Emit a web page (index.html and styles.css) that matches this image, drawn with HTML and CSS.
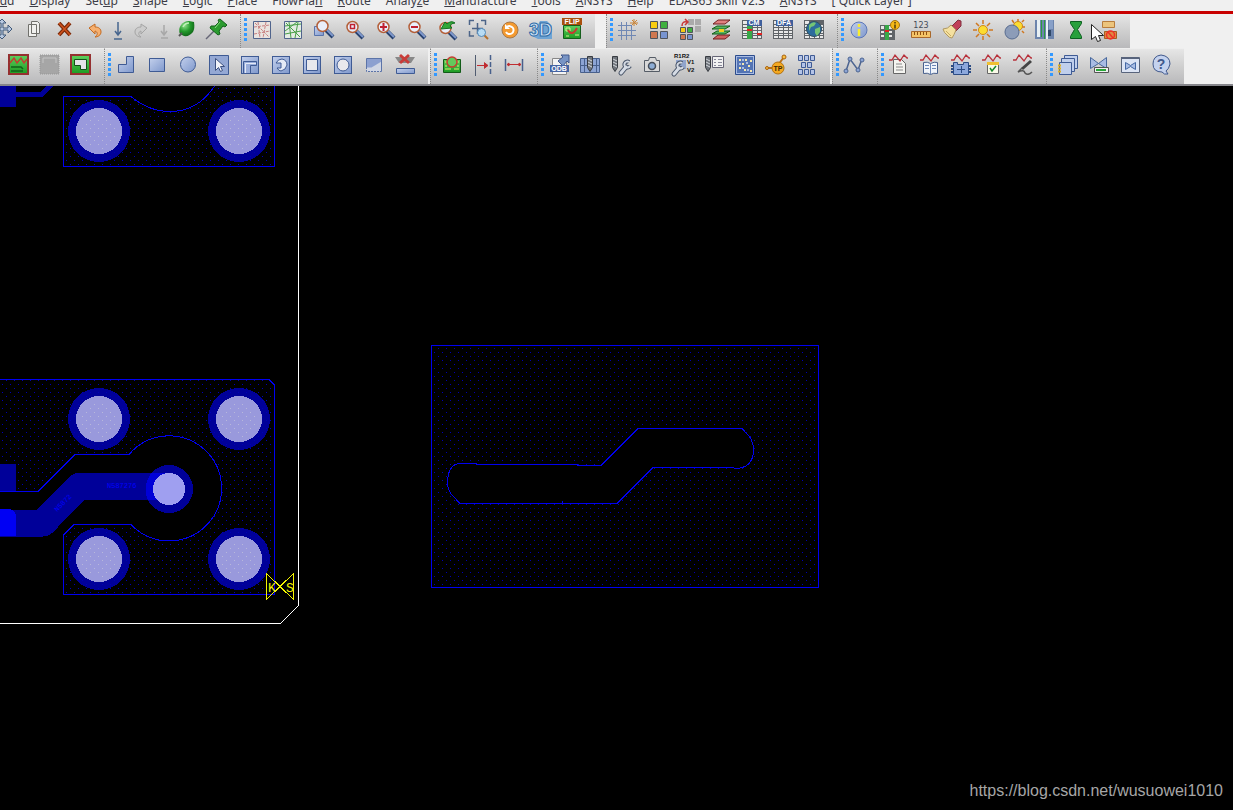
FILE: index.html
```html
<!DOCTYPE html>
<html lang="en">
<head>
<meta charset="utf-8">
<title>PCB Editor</title>
<link rel="stylesheet" href="styles.css">
</head>
<body>
<svg class="defs" aria-hidden="true">
  <defs>
    <linearGradient id="blue" x1="0" y1="0" x2="1" y2="1"><stop offset="0" stop-color="#c3d0ec"/><stop offset="1" stop-color="#7f98cc"/></linearGradient>
    <linearGradient id="green" x1="0" y1="0" x2="0" y2="1"><stop offset="0" stop-color="#5fd05f"/><stop offset="1" stop-color="#1c9a22"/></linearGradient>
    <radialGradient id="ball" cx=".35" cy=".3" r=".8"><stop offset="0" stop-color="#8fe08a"/><stop offset=".5" stop-color="#249a2c"/><stop offset="1" stop-color="#0b5a12"/></radialGradient>
    <pattern id="dots" width="8" height="8" patternUnits="userSpaceOnUse"><path d="M2 0h1v1h-1zM6 4h1v1h-1z" fill="#0000b4" stroke="none"/></pattern>
    <pattern id="specks" width="8" height="8" patternUnits="userSpaceOnUse"><path d="M2 0h1v1h-1zM6 4h1v1h-1z" fill="#b8b8dc" stroke="none"/></pattern>
    <symbol id="lens" viewBox="0 0 25 25"><path d="M13 13l7 7" stroke="#26406e" stroke-width="4"/><path d="M13 12l7 7" stroke="#7f98cc" stroke-width="2"/><circle cx="9.500" cy="9" r="5.500" fill="#e9eefa" stroke="#b4603a" stroke-width="1.500"/></symbol>
    <symbol id="tile" viewBox="0 0 25 25"><rect x="3.5" y="3.5" width="17" height="17" fill="url(#blue)" stroke="#3f5b94"/></symbol>
    <symbol id="wave" viewBox="0 0 25 25"><path d="M2 7h3l3-5 5 6 4-6 3 3h1" fill="none" stroke="#b8303a" stroke-width="1.3"/></symbol>
    <symbol id="sheet" viewBox="0 0 25 25"><path d="M2 2h20v19H2z" fill="#606468"/><path d="M3 7h4v2H3zm5 0h4v2H8zm5 0h4v2h-4zm5 0h3v2h-3zM3 10h4v2H3zm5 0h4v2H8zm5 0h4v2h-4zm5 0h3v2h-3zM3 13h4v2H3zm5 0h4v2H8zm5 0h4v2h-4zm5 0h3v2h-3zM3 16h4v1H3zm5 0h4v1H8zm5 0h4v1h-4zm5 0h3v1h-3zM3 18h4v2H3zm5 0h4v2H8zm5 0h4v2h-4zm5 0h3v2h-3zM3 3h4v3H3z" fill="#e8e8e8"/></symbol>
    <symbol id="drill" viewBox="0 0 25 25"><path d="M3.500 3.500h5v11l-2.500 4-2.500-4z" fill="#70757c" stroke="#383c42"/><path d="M4 6l4 2M4 9l4 2M4 12l4 2" stroke="#d4d8dc"/></symbol>
    <symbol id="wrench" viewBox="0 0 25 25"><path d="M12 20l5-6" stroke="#485468" stroke-width="5" stroke-linecap="round"/><path d="M20 9a3 3 0 1 0 1 4" fill="none" stroke="#485468" stroke-width="4"/><path d="M12 20l5-6" stroke="#d5dbe4" stroke-width="3" stroke-linecap="round"/><path d="M20 9a3 3 0 1 0 1 4" fill="none" stroke="#d5dbe4" stroke-width="2"/></symbol>
    <symbol id="pad" viewBox="0 0 62 62"><g stroke="none"><circle cx="31" cy="31" r="31" fill="#000099"/><circle cx="31" cy="31" r="31" fill="url(#dots)"/><circle cx="31" cy="31" r="23" fill="#9999dc"/><circle cx="31" cy="31" r="18" fill="url(#specks)"/></g></symbol>
  </defs>
</svg>

<nav class="menu" aria-label="Main menu">
  <button>A<u>d</u>d</button><button><u>D</u>isplay</button><button>Set<u>u</u>p</button><button><u>S</u>hape</button><button><u>L</u>ogic</button><button><u>P</u>lace</button><button>FlowPla<u>n</u></button><button><u>R</u>oute</button><button>Analy<u>z</u>e</button><button><u>M</u>anufacture</button><button><u>T</u>ools</button><button><u>A</u>NSYS</button><button><u>H</u>elp</button><button>EDA365 Skill V2.3</button><button><u>A</u>NSYS</button><button>[ Quick Layer ]</button>
</nav>

<div class="row">
  <div class="group lead" role="toolbar" aria-label="Edit">
    <button aria-label="Move"><svg viewBox="0 0 25 25"><path d="M12 1l4 4h-3v5h5V7l4 4-4 4v-3h-5v5h3l-4 4-4-4h3v-5H6v3l-4-4 4-4v3h5V5H8z" fill="#b9c9e0" stroke="#3f5878"/></svg></button>
    <button aria-label="Copy"><svg viewBox="0 0 25 25"><path d="M7.500 6.500h8v12h-8zM10.500 3.500h6l2 2v10h-8z" fill="#f0f0ee" stroke="#70706c"/></svg></button>
    <button aria-label="Delete"><svg viewBox="0 0 25 25"><path d="M7 5l11 12M18 5L7 17" stroke="#7a2a0a" stroke-width="4"/><path d="M7 5l11 12M18 5L7 17" stroke="#d0521c" stroke-width="1.500"/></svg></button>
    <button aria-label="Undo"><svg viewBox="0 0 25 25"><path d="M6 10l6-4v3c4 0 6 2 6 5s-3 5-6 5c3-2 3-5 0-6v3z" fill="#f6b070" stroke="#c46a20"/></svg></button>
    <button class="slim" aria-label="Undo list"><svg viewBox="0 0 13 25"><path d="M6 4v12M3 13l3 4 3-4M2 21h8" fill="none" stroke="#46658e" stroke-width="1.500"/></svg></button>
    <button aria-label="Redo"><svg viewBox="0 0 25 25"><path d="M18 10l-6-4v3c-4 0-6 2-6 5s3 5 6 5c-3-2-3-5 0-6v3z" fill="#ccc" stroke="#a4a4a4"/></svg></button>
    <button class="slim" aria-label="Redo list"><svg viewBox="0 0 13 25"><path d="M6 7v9M3 13l3 4 3-4M3 20h7" fill="none" stroke="#a8a8a8" stroke-width="1.500"/></svg></button>
    <button aria-label="Unhighlight"><svg viewBox="0 0 25 25"><path d="M5 16Q3 11 6 7q3-4 8-4l5 1q1 6-1 10-4 5-9 4z" fill="url(#ball)"/><path d="M8 9q2-4 6-4" fill="none" stroke="#c0f0b8" stroke-width="1.500"/><path d="M4 18l3-3" stroke="#555" stroke-width="2"/></svg></button>
    <button aria-label="Pin"><svg viewBox="0 0 25 25"><path d="M0 21l8-8" stroke="#667" stroke-width="1.500"/><path d="M14 1l7 6-2 2-2-1-4 5 1 3-2 1-8-7 1-2h4l4-4-1-2z" fill="#2c9c30" stroke="#12601a"/><path d="M14 4l-5 6" stroke="#86dc80"/></svg></button>
  </div>
  <div class="group" role="toolbar" aria-label="View"><i class="grip"></i>
    <button aria-label="Unrats all"><svg viewBox="0 0 25 25"><path d="M3.500 3.500h17v17h-17z" fill="#e9e4e0" stroke="#50648c"/><path d="M4 9l16-2M4 16l16-3M8 4l2 16M16 4l-3 16M5 5l14 14" stroke="#c88080" stroke-dasharray="3 1"/></svg></button>
    <button aria-label="Rats all"><svg viewBox="0 0 25 25"><path d="M3.500 3.500h17v17h-17z" fill="#e4ece4" stroke="#50648c"/><path d="M4 8l16-2M4 16l16-3M8 4l2 16M17 4l-3 16M5 5l14 14M4 13l12-9" stroke="#48a048"/></svg></button>
    <button aria-label="Zoom points"><svg viewBox="0 0 25 25"><path d="M2.500 8.500h9v9h-9z" fill="url(#blue)" stroke="#5873ac"/><use href="#lens" x="1" y="-1"/></svg></button>
    <button aria-label="Zoom fit"><svg viewBox="0 0 25 25"><use href="#lens"/><path d="M7.500 6.500h4v4h-4z" fill="none" stroke="#c02030" stroke-width="1.500"/></svg></button>
    <button aria-label="Zoom in"><svg viewBox="0 0 25 25"><use href="#lens"/><path d="M9.500 5v8M6 9h7" stroke="#c02030" stroke-width="2"/></svg></button>
    <button aria-label="Zoom out"><svg viewBox="0 0 25 25"><use href="#lens"/><path d="M6 9h7" stroke="#c02030" stroke-width="2"/></svg></button>
    <button aria-label="Zoom previous"><svg viewBox="0 0 25 25"><use href="#lens" y="1"/><path d="M5 11l4-7 2 2q4-4 8-1-4 0-5 3l2 2z" fill="#30a838" stroke="#157020"/></svg></button>
    <button aria-label="Zoom selection"><svg viewBox="0 0 25 25"><path d="M2.500 7V2.500H7M14 2.500h4.500V7M2.500 13v5H7M10.500 5v11M5 10.500h11" fill="none" stroke="#4c6488" stroke-width="1.500"/><path d="M17 17l4 4" stroke="#b4702c" stroke-width="2"/><circle cx="14.500" cy="14.500" r="4" fill="#b8dcf4" stroke="#5088b8"/></svg></button>
    <button aria-label="Refresh"><svg viewBox="0 0 25 25"><circle cx="12" cy="12" r="8" fill="#f49a30" stroke="#a87848"/><path d="M8 14a4 4 0 1 0 1-5" fill="none" stroke="#fff" stroke-width="2"/><path d="M7 6v5h5z" fill="#fff"/></svg></button>
    <button aria-label="3D view"><svg viewBox="0 0 25 25"><path d="M11 3h7l5 5v13H9l-6-3z" fill="#6fa4d4"/><text class="three" x="0" y="18">3D</text></svg></button>
    <button aria-label="Flip design"><svg viewBox="0 0 25 25"><path d="M3.500 7.500h17v13h-17z" fill="url(#green)" stroke="#155e1c"/><path d="M6 10h4v3H6zM15 17h4M6 18h3" stroke="#d8f090" fill="none"/><path d="M8 12q4 7 9-2" fill="none" stroke="#c83830" stroke-width="2"/><path d="M2 0h20v7H2z" fill="#a9500e"/><text class="tag" x="12" y="6">FLIP</text></svg></button>
  </div>
  <div class="group apart" role="toolbar" aria-label="Setup"><i class="grip"></i>
    <button aria-label="Grid toggle"><svg viewBox="0 0 25 25"><path d="M5.500 4v18M10.500 4v18M15.500 7v15M2 7.500h14M2 12.500h18M2 17.500h18" stroke="#7088b4"/><path d="M18 1v7M14 5h8M16 2l5 5M21 2l-5 5" stroke="#c88438"/></svg></button>
    <button aria-label="Colors"><svg viewBox="0 0 25 25"><g stroke="#50545c"><path d="M3.500 3.500h7v7h-7z" fill="#f8cc10"/><path d="M13.500 3.500h7v7h-7z" fill="#40b040"/><path d="M3.500 13.500h7v7h-7z" fill="#d07850"/><path d="M13.500 13.500h7v7h-7z" fill="#7894d0"/></g></svg></button>
    <button aria-label="Swap colors"><svg viewBox="0 0 25 25"><path d="M10 1h6v6h-6zm7 0h6v6h-6zm0 7h6v6h-6z" fill="#aaa"/><g stroke="#50545c"><path d="M2.500 9.500h5v5h-5z" fill="#f8cc10"/><path d="M9.500 9.500h5v5h-5z" fill="#40b040"/><path d="M2.500 16.500h5v5h-5z" fill="#d07850"/><path d="M9.500 16.500h5v5h-5z" fill="#7894d0"/></g><path d="M4 8q0-5 5-4M7 1l3 3-3 3" fill="none" stroke="#c83838" stroke-width="1.500"/></svg></button>
    <button aria-label="Cross section"><svg viewBox="0 0 25 25"><path d="M4 21l5-4h12l-5 4z" fill="#d06060" stroke="#702020"/><path d="M3 16l5-3h13l-5 3z" fill="#58b860" stroke="#145c1c"/><path d="M3 11l5-3h13l-5 3z" fill="#58b860" stroke="#145c1c"/><path d="M10 11h5v3h-5z" fill="#f0d020"/><path d="M4 6l5-4h12l-5 4z" fill="#e08080" stroke="#702020"/></svg></button>
    <button aria-label="Constraint manager"><svg viewBox="0 0 25 25"><use href="#sheet"/><path d="M7 7h5v14H7z" fill="#38a848"/><path d="M7 11h5v2H7zm10 4h5v2h-5z" fill="#e02020"/><path d="M7 2h15v6H7z" fill="#3f5f9c"/><text class="tag" x="14" y="7">CM</text></svg></button>
    <button aria-label="DFA"><svg viewBox="0 0 25 25"><use href="#sheet"/><path d="M5 2h17v6H5z" fill="#3f5f9c"/><text class="tag" x="13" y="7">DFA</text></svg></button>
    <button aria-label="Global settings"><svg viewBox="0 0 25 25"><use href="#sheet"/><circle cx="12" cy="11" r="7.500" fill="#2c6c9c" stroke="#305060"/><path d="M7 7q4-4 7-2l-2 3-3 1-2 4zM13 11l5-2v5l-3 4-2-3z" fill="#74c474"/></svg></button>
  </div>
  <div class="group" role="toolbar" aria-label="Display"><i class="grip"></i>
    <button aria-label="Show element"><svg viewBox="0 0 25 25"><circle cx="12" cy="12" r="8" fill="url(#blue)" stroke="#5c78b8"/><path d="M12 6v3M12 11v7" stroke="#f8ec30" stroke-width="2.500"/></svg></button>
    <button aria-label="Constraint info"><svg viewBox="0 0 25 25"><path d="M2 7h15v15H2z" fill="#606468"/><path d="M3 8h3v3H3zm0 5h3v2H3zm0 4h3v2H3zm8-9h3v3h-3zm0 5h3v2h-3zm0 4h3v2h-3z" fill="#e8e8e8"/><path d="M7 7h4v15H7z" fill="#38a848"/><path d="M7 12h4v2H7z" fill="#e02020"/><circle cx="17" cy="7" r="4.500" fill="#f4b818" stroke="#a87410"/><path d="M17 4v1.500M17 6.500v4" stroke="#503808" stroke-width="1.500"/></svg></button>
    <button aria-label="Measure"><svg viewBox="0 0 25 25"><text class="digits" x="12" y="10">123</text><path d="M2.500 13.500h19v6h-19z" fill="#f4c468" stroke="#a8682c"/><path d="M5.500 14v3M8.500 14v3M11.500 14v3M14.500 14v3M17.500 14v3" stroke="#905010"/></svg></button>
    <button aria-label="Highlight"><svg viewBox="0 0 25 25"><path d="M12 8l6-6 3 1v5l-6 6z" fill="#c04058" stroke="#803040"/><path d="M3 11q5 0 8-4l5 5q-2 5-4 8-3 0-5-3-3-2-4-6z" fill="#f4e0a0" stroke="#b09860"/><path d="M6 13l5 5" stroke="#c8ac60"/></svg></button>
    <button aria-label="Shadow on"><svg viewBox="0 0 25 25"><path d="M12 2v4M12 18v4M2 12h4M18 12h4M5 5l3 3M16 16l3 3M19 5l-3 3M8 16l-3 3" stroke="#d07820" stroke-width="1.500"/><circle cx="12" cy="12" r="4.500" fill="#fcdc30" stroke="#d08818"/></svg></button>
    <button aria-label="Shadow off"><svg viewBox="0 0 25 25"><path d="M16 1v3M20 4l2-2M20 9h3M20 13l2 2M10 2l2 3" stroke="#d07820" stroke-width="1.500"/><circle cx="16" cy="8" r="4.500" fill="#fcdc30" stroke="#d08818"/><circle cx="10" cy="14" r="7" fill="#8c9cb8" stroke="#586c90"/></svg></button>
    <button aria-label="Layers"><svg viewBox="0 0 25 25"><path d="M2 2h19v19H2z" fill="#6c84ac"/><path d="M4 2h3v17H4zM13 2h2v19h-2z" fill="#e8f0f4"/><path d="M8 2h1v17H8zM11 2h1v19h-1z" fill="#2c9c40"/><path d="M16 2h4v9h-4z" fill="#88a0c8"/><path d="M15 12h3v6h-3z" fill="#304868"/></svg></button>
    <button aria-label="Waiver"><svg viewBox="0 0 25 25"><path d="M6.500 3.500h11v2l-4 6 4 7v2h-11v-2l4-7-4-6z" fill="#28a03c" stroke="#0c6020"/></svg></button>
    <button aria-label="Hide"><svg viewBox="0 0 25 25"><path d="M7.500 3.500h12v6h-12z" fill="#ecc47c" stroke="#b87c3c"/><path d="M9.500 13.500h12v7h-12z" fill="#e08840" stroke="#a85c20"/><circle cx="15.500" cy="17" r="4" fill="none" stroke="#f03028" stroke-width="1.500"/><path d="M13 14l5 6" stroke="#f03028" stroke-width="1.500"/><path d="M-3.500 6.500v15l4-3 2 5 3-1-2-5h5z" fill="#fff" stroke="#222"/></svg></button>
  </div>
</div>

<div class="row second">
  <div class="group start" role="toolbar" aria-label="Application mode">
    <button aria-label="Etch edit"><svg viewBox="0 0 25 25"><path d="M3 2h19v19H3z" fill="url(#green)" stroke="#953030" stroke-width="2"/><path d="M4 10l4-5 3 5 4-5 3 5 3-4" fill="none" stroke="#c04030" stroke-width="1.500"/><path d="M5 14h10l2 2M5 18h12" fill="none" stroke="#126018" stroke-width="1.500"/></svg></button>
    <button aria-label="Placement edit"><svg viewBox="0 0 25 25"><path d="M3 2h19v19H3z" fill="#a6a6a6" stroke="#979797" stroke-dasharray="1 1"/><path d="M6 5h13v5M6 5v5" fill="none" stroke="#c6c6c6"/></svg></button>
    <button aria-label="Shape edit"><svg viewBox="0 0 25 25"><path d="M3 2h19v19H3z" fill="url(#green)" stroke="#953030" stroke-width="2"/><path d="M6.500 6.500h12v10h-6v-4h-6z" fill="#e4e4e8" stroke="#145018"/></svg></button>
  </div>
  <div class="group" role="toolbar" aria-label="Shape"><i class="grip"></i>
    <button aria-label="Add polygon"><svg viewBox="0 0 25 25"><path d="M12.500 3.500h7v16h-15v-8h8z" fill="url(#blue)" stroke="#3f5b94"/></svg></button>
    <button aria-label="Add rectangle"><svg viewBox="0 0 25 25"><path d="M4.500 5.500h15v13h-15z" fill="url(#blue)" stroke="#3f5b94"/></svg></button>
    <button aria-label="Add circle"><svg viewBox="0 0 25 25"><circle cx="12" cy="11.500" r="7.500" fill="url(#blue)" stroke="#3f5b94"/></svg></button>
    <button aria-label="Select shape"><svg viewBox="0 0 25 25"><path d="M2.500 2.500h19v19h-19z" fill="#94a8d4" stroke="#3f5b94"/><path d="M8.500 5.500v12l3-3 2 4 2-1-2-4h4z" fill="#f0f2f8" stroke="#3c5080"/></svg></button>
    <button aria-label="Void polygon"><svg viewBox="0 0 25 25"><use href="#tile"/><path d="M5.500 20V8.500H18.500v4h-6V20" fill="#9aaedb" stroke="#3f5b94"/><path d="M7.500 20v-9.500H18" fill="none" stroke="#e4eaf6"/></svg></button>
    <button aria-label="Edit boundary"><svg viewBox="0 0 25 25"><use href="#tile"/><path d="M7 10q2-4 6-4 5 1 5 6-1 5-6 6-2 0-4-3h4v-5z" fill="#e4eaf6" stroke="#3f5b94"/></svg></button>
    <button aria-label="Void rectangle"><svg viewBox="0 0 25 25"><use href="#tile"/><path d="M6.500 6.500h11v11h-11z" fill="#e8e8ec" stroke="#3f5b94"/></svg></button>
    <button aria-label="Void circle"><svg viewBox="0 0 25 25"><use href="#tile"/><circle cx="12" cy="12" r="6" fill="#e8e8ec" stroke="#3f5b94"/></svg></button>
    <button aria-label="Void element"><svg viewBox="0 0 25 25"><path d="M4.500 5.500h15v13h-15z" fill="#d0d6e4"/><path d="M4.500 5.500h15v3l-10 6h-5z" fill="#8ca0d0"/><path d="M4.500 14V5.500h15V18.500" fill="none" stroke="#5c74a8"/><path d="M4.500 14v4.500h15" fill="none" stroke="#5c74a8" stroke-dasharray="2 1"/></svg></button>
    <button aria-label="Delete islands"><svg viewBox="0 0 25 25"><path d="M2 4h20l-4 6H6z" fill="#888"/><path d="M7 2l9 8M16 2l-9 8" stroke="#c83c38" stroke-width="3"/><path d="M3.500 15.500h18v5h-18z" fill="url(#blue)" stroke="#3f5b94"/></svg></button>
  </div>
  <div class="group gap" role="toolbar" aria-label="Dimension"><i class="grip"></i>
    <button aria-label="Artwork"><svg viewBox="0 0 25 25"><path d="M3.500 6.500h17v13h-17z" fill="url(#green)" stroke="#125c18"/><path d="M5 9h3M16 9h3M5 16h6M14 16h5M5 13h2M17 13h2" stroke="#d8f070"/><circle cx="12" cy="9" r="5" fill="#64c85c" stroke="#c83c30" stroke-width="1.500"/></svg></button>
    <button aria-label="Linear dimension"><svg viewBox="0 0 25 25"><path d="M4.500 2v21" stroke="#505c70"/><path d="M19.500 2v21" stroke="#48608c" stroke-width="1.500" stroke-dasharray="5 2"/><path d="M6 12.500h10M13 9.500l4 3-4 3" fill="#c02c30" stroke="#c02c30"/></svg></button>
    <button aria-label="Datum dimension"><svg viewBox="0 0 25 25"><path d="M3.500 6v12M20.500 6v12" stroke="#48608c" stroke-width="1.500"/><path d="M5 11.500h14M7 10l-2 1.500L7 13zM17 10l2 1.500-2 1.500z" fill="#c02c30" stroke="#c02c30"/></svg></button>
  </div>
  <div class="group" role="toolbar" aria-label="Manufacture"><i class="grip"></i>
    <button aria-label="ODB export"><svg viewBox="0 0 25 25"><path d="M5.500 5.500h14v16h-14z" fill="#f4f4f4" stroke="#888"/><path d="M13 10l-2-2 5-4-2-2h8v8l-2-2-4 5z" fill="#7894c4" stroke="#40588c"/><path d="M3 12h19v7H3z" fill="#4464a4"/><text class="tag" x="12" y="18">ODB</text></svg></button>
    <button aria-label="Backdrill"><svg viewBox="0 0 25 25"><path d="M2.500 5.500h19v14h-19z" fill="#8ca4d4" stroke="#48608c"/><path d="M6.500 5v14M18.500 5v14M2 12.500h20" stroke="#48608c"/><use href="#drill" x="6"/></svg></button>
    <button aria-label="Drill customization"><svg viewBox="0 0 25 25"><use href="#drill"/><use href="#wrench"/></svg></button>
    <button aria-label="Photo"><svg viewBox="0 0 25 25"><path d="M4.500 7.500h4l1-3h6l1 3h3v11h-15z" fill="#d8d8d8" stroke="#555c66"/><circle cx="12" cy="13" r="3.500" fill="#8cacd4" stroke="#444c58" stroke-width="1.500"/></svg></button>
    <button aria-label="Silkscreen"><svg viewBox="0 0 25 25"><path d="M5 7h10v9H5z" fill="#90a4cc"/><use href="#wrench" x="-9" y="1"/><text class="note" x="3" y="5">R1R2</text><text class="note" x="16" y="11">V1</text><text class="note" x="16" y="19">V2</text></svg></button>
    <button aria-label="NC legend"><svg viewBox="0 0 25 25"><use href="#drill"/><path d="M10.500 3.500h11v11h-11z" fill="#f2f2f2" stroke="#667"/><path d="M12 6.500h2M16 6.500h4M12 9.500h2M16 9.500h4M12 12.500h2M16 12.500h4" stroke="#889"/></svg></button>
    <button aria-label="Thieving"><svg viewBox="0 0 25 25"><path d="M2.500 2.500h19v19h-19z" fill="#a8bce4" stroke="#2c4c8c"/><path d="M4 4h16v16H4z" fill="#5474b4"/><path d="M6 6h2v2H6zm6 0h2v2h-2zm5 1h2v2h-2zM9 10h2v2H9zm6 2h2v2h-2zM6 14h2v2H6zm5 2h2v2h-2zm6 1h2v2h-2z" fill="#f4e8b0"/><path d="M9 6h2v2H9zm-3 4h2v2H6zm7-1h2v2h-2zm-4 5h2v2H9zm5 2h2v2h-2z" fill="#a8bce4"/></svg></button>
    <button aria-label="Test prep"><svg viewBox="0 0 25 25"><path d="M3 15h8M14 12l6-8" stroke="#b87018" stroke-width="2"/><circle cx="3" cy="15" r="1.500" fill="#f8c040" stroke="#a86010"/><circle cx="20" cy="4" r="2" fill="#f8c040" stroke="#a86010"/><circle cx="14" cy="15" r="6" fill="#f4a820" stroke="#b07010"/><text class="tp" x="14" y="18">TP</text></svg></button>
    <button aria-label="Panelize"><svg viewBox="0 0 25 25"><path d="M3.500 2.500h4v5h-4zM9.500 2.500h4v5h-4zM15.500 2.500h4v5h-4zM6.500 9.500h4v5h-4zM12.500 9.500h4v5h-4zM3.500 16.500h4v5h-4zM9.500 16.500h4v5h-4zM15.500 16.500h4v5h-4z" fill="#b4c4e8" stroke="#3f5b94"/></svg></button>
  </div>
  <div class="group gap" role="toolbar" aria-label="Signal"><i class="grip"></i>
    <button aria-label="Signal path"><svg viewBox="0 0 25 25"><path d="M4 18L8 6l8 11 4-11" fill="none" stroke="#4c6490" stroke-width="1.500"/><g fill="#8ca4d4" stroke="#4c6490"><circle cx="4" cy="18" r="2"/><circle cx="8" cy="6" r="2"/><circle cx="16" cy="17" r="2"/><circle cx="20" cy="7" r="2"/></g></svg></button>
  </div>
  <div class="group" role="toolbar" aria-label="Analyze"><i class="grip"></i>
    <button aria-label="Signal model"><svg viewBox="0 0 25 25"><path d="M6.500 6.500h8l4 4v10h-12z" fill="#f4f4f0" stroke="#666"/><path d="M9 11h6M9 14h7M9 17h7" stroke="#888"/><use href="#wave"/></svg></button>
    <button aria-label="Signal library"><svg viewBox="0 0 25 25"><path d="M5.500 9.500q4-1 7 1 4-2 7-1v11q-4-1-7 1-3-2-7-1z" fill="#f0f4fa" stroke="#48608c"/><path d="M12.500 11v10M7 12.500h4M7 15.500h4M14 12.500h4M14 15.500h4" stroke="#6c88b8"/><use href="#wave"/></svg></button>
    <button aria-label="Signal init"><svg viewBox="0 0 25 25"><path d="M4.500 9.500h4v2h6v-2h5v12h-15z" fill="#8ca8dc" stroke="#2c4c84"/><path d="M3 12v8M21 12v8" stroke="#2c4c84" stroke-width="2" stroke-dasharray="2 1"/><path d="M8 16.500h8M12.500 13v7" stroke="#2c4c84"/><use href="#wave"/></svg></button>
    <button aria-label="Signal audit"><svg viewBox="0 0 25 25"><path d="M7.500 9.500h11v11h-11z" fill="#fafae8" stroke="#666"/><path d="M7 9h12v3H7z" fill="#f0c030"/><path d="M10 15l2 3 4-5" fill="none" stroke="#158828" stroke-width="1.500"/><use href="#wave"/></svg></button>
    <button aria-label="Signal probe"><svg viewBox="0 0 25 25"><path d="M20 8l-9 8" stroke="#444" stroke-width="3"/><path d="M11 15l-4 4q6-3 7 1 3 3 7-1" fill="none" stroke="#555" stroke-width="1.500"/><use href="#wave"/></svg></button>
  </div>
  <div class="group" role="toolbar" aria-label="Window"><i class="grip"></i>
    <button aria-label="Cascade"><svg viewBox="0 0 25 25"><g fill="#c0cfec" stroke="#3f5b94"><path d="M8.500 2.500h13v13h-13z"/><path d="M5.500 5.500h13v13h-13z"/><path d="M3.500 9.500h12v12h-12z"/></g><path d="M2 12.500h3M2 15.500h3M2 18.500h3" stroke="#e0b020" stroke-width="2"/></svg></button>
    <button aria-label="DRC update"><svg viewBox="0 0 25 25"><path d="M3.500 4.500l8 6 8-6v11l-8-5-8 5z" fill="#a8bce4" stroke="#48689c"/><path d="M7.500 14.500h14v5h-14z" fill="#f0f0f0" stroke="#555"/><path d="M9 16h10v2H9z" fill="#28a838"/></svg></button>
    <button aria-label="DRC window"><svg viewBox="0 0 25 25"><path d="M3.500 4.500h18v15h-18z" fill="#dce4f4" stroke="#58647c"/><path d="M3 5h18" stroke="#58647c" stroke-width="2"/><path d="M7.500 9.500l5 3 5-3v7l-5-3-5 3z" fill="#a8bce4" stroke="#4468a4"/></svg></button>
    <button aria-label="Help"><svg viewBox="0 0 25 25"><path d="M12 2q9 1 9 9-1 5-4 7l2 3q-4 1-6-2-9 0-9-8 0-8 8-9z" fill="#c4d2ee" stroke="#40588c"/><text class="ask" x="12" y="16">?</text></svg></button>
  </div>
</div>

<main class="canvas">
  <svg class="board" role="img" aria-label="Board layout">
    <g transform="translate(0 -86)" fill="none" stroke="#0000f0">
      <path d="M0 86h16v21H0z" fill="#000099" stroke="none"/>
      <path d="M0 94.500H41L52 84" stroke="#000099" stroke-width="5"/>
      <path d="M214.500 86Q198 111.500 170 111.500Q149 111.500 131 96.500H63.500V166.500H274.500V80H218Z" fill="url(#dots)"/>
      <path d="M0 379.500H269L274.500 385V594.500H63.500V535L74 524.500H131A52.500 52.500 0 1 0 129 454.500H75L38 491.500H0" fill="url(#dots)"/>
      <path d="M0 464h16v27H0z" fill="#000099" stroke="none"/>
      <path d="M0 523H43L79 486.500H163" stroke="#000099" stroke-width="27" stroke-linejoin="round"/>
      <path d="M0 509h10q6 2 6 8v19H0z" fill="#0000f4" stroke="none"/>
      <use href="#pad" x="68" y="100" width="62" height="62"/><use href="#pad" x="208" y="100" width="62" height="62"/>
      <use href="#pad" x="68" y="388" width="62" height="62"/><use href="#pad" x="208" y="388" width="62" height="62"/>
      <use href="#pad" x="68" y="528" width="62" height="62"/><use href="#pad" x="208" y="528" width="62" height="62"/>
      <g stroke="none"><circle cx="169" cy="489" r="24" fill="#000099"/><path d="M151 473h18v27h-21q-6-12 3-27z" fill="#0000d8"/><circle cx="169" cy="489" r="16" fill="#9f9ff0"/></g>
      <text class="net" x="107" y="488">N587276</text>
      <text class="net" transform="translate(57 512) rotate(-45)">N5872</text>
      <path d="M298.500 86V605.500L280.500 623.500H0" stroke="#fff"/>
      <path d="M266.500 573.500L293.500 599.500V573.500L266.500 599.500Z" stroke="#f4f400"/>
      <text class="ks" x="268" y="592">K</text><text class="ks" x="286" y="592">S</text>
      <path d="M431.500 345.500H818.500V587.500H431.500Z" fill="url(#dots)"/>
      <path d="M459 463.500H476V464.500H577V465.500H601L638 428.500H742L749 436Q753.500 442 753.500 450Q753 468.500 735 468.500L733 467.500H653L617 503.500H460L452 495Q447.500 490 447.500 482Q448 465 459 463.500Z" fill="#000"/>
      <path d="M562.500 501v3"/>
    </g>
  </svg>
  <a class="credit" href="https://blog.csdn.net/wusuowei1010">https://blog.csdn.net/wusuowei1010</a>
</main>
</body>
</html>
```

FILE: styles.css
```css
* { box-sizing: border-box; }
body {
  margin: 0;
  height: 100vh;
  display: flex;
  flex-direction: column;
  overflow: hidden;
  background: #f0f0f0;
  font-family: "Noto Sans", "Open Sans", sans-serif;
}
.defs { position: absolute; width: 0; height: 0; }
button {
  flex: none;
  margin: 0;
  padding: 0;
  border: 0;
  background: none;
  font: inherit;
  color: inherit;
}

.menu {
  display: flex;
  flex: none;
  align-items: flex-end;
  gap: 15px;
  height: 14px;
  margin-left: -8px;
  padding-bottom: 2px;
  border-bottom: 3px solid #c80000;
  overflow: hidden;
  font-size: 12px;
  line-height: 17px;
  color: #3c3c46;
  white-space: nowrap;
}
.menu button { height: 17px; }
.menu u { text-underline-offset: 1px; }

.row { display: flex; flex: none; }
.group {
  display: flex;
  flex: none;
  align-items: flex-start;
  padding: 0 7px 1px 3px;
  border-left: 1px dotted #888;
  background: linear-gradient(#e6e6e6, #cfcfcf 50%, #b9b9bb);
}
.second .group { padding-bottom: 2px; border-top: 1px solid #eee; }
.group.lead { margin-left: -13px; padding-left: 0; padding-right: 6px; border-left: 0; }
.group.start { padding-left: 3px; padding-right: 8px; border-left: 0; }
.apart { margin-left: 11px; }
.gap { margin-left: 2px; }
.grip {
  flex: none;
  width: 3px;
  height: 23px;
  margin-top: 4px;
  background: repeating-linear-gradient(#3399ff 0 3px, transparent 3px 5px);
}
.group button {
  display: grid;
  place-items: center;
  width: 31px;
  height: 33px;
}
.group .slim { width: 15px; }
.group svg { width: 25px; height: 25px; overflow: visible; }
.group .slim svg { width: 13px; }
.group text { text-anchor: middle; font-family: "Liberation Sans", sans-serif; font-weight: bold; }
.group .three { text-anchor: start; font-size: 18px; fill: #cfe3f5; stroke: #2f6da8; }
.group .tag { font-size: 7px; fill: #fff; }
.group .digits { font-family: "DejaVu Sans", sans-serif; font-size: 8px; font-weight: normal; fill: #444c58; }
.group .note { text-anchor: start; font-size: 6px; fill: #111; }
.group .tp { font-size: 7px; fill: #402800; }
.group .ask { font-size: 14px; fill: #40588c; }

.canvas {
  position: relative;
  flex: 1;
  min-height: 0;
  border-top: 2px solid #85858a;
  background: #000;
}
.board { display: block; width: 100%; height: 100%; shape-rendering: crispEdges; }
.board text { stroke: none; }
.net { font: 7px "Liberation Mono", monospace; fill: #0000ff; }
.ks { font: 13px "Liberation Mono", monospace; fill: #f4f400; }
.credit {
  position: absolute;
  right: 10px;
  bottom: 9px;
  font: 16px/20px "Liberation Sans", sans-serif;
  color: #a6a6a6;
  text-decoration: none;
}
```
